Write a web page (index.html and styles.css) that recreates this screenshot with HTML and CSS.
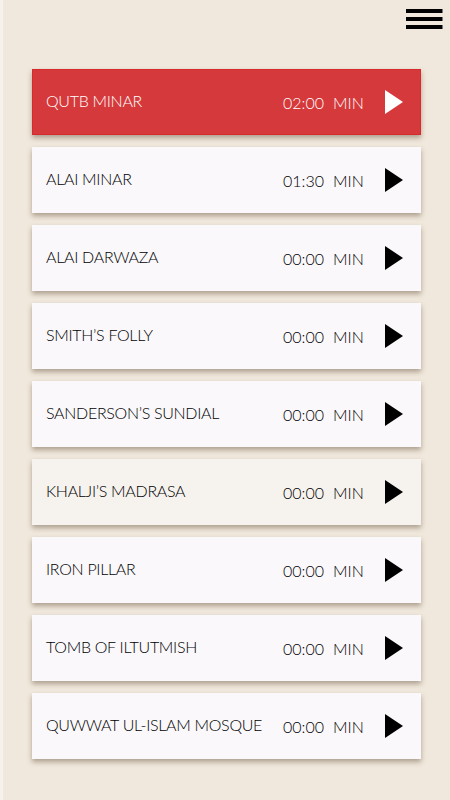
FILE: index.html
```html
<!DOCTYPE html>
<html lang="en">
<head>
    <meta charset="UTF-8">
    <meta name="viewport" content="width=device-width, initial-scale=1.0">
    <title>Qutb Complex Audio Tour</title>
    <link rel="stylesheet" href="styles.css">
</head>
<body>
    <div class="page">
        <div class="topbar">
            <div class="menu">
                <span></span>
                <span></span>
                <span></span>
            </div>
        </div>
        <div class="list">
            <div class="track active">
                <span class="name">QUTB MINAR</span>
                <span class="time">02:00<span class="unit">MIN</span></span>
                <svg class="play" viewBox="0 0 18 24"><polygon points="0,0 18,12 0,24"/></svg>
            </div>
            <div class="track">
                <span class="name">ALAI MINAR</span>
                <span class="time">01:30<span class="unit">MIN</span></span>
                <svg class="play" viewBox="0 0 18 24"><polygon points="0,0 18,12 0,24"/></svg>
            </div>
            <div class="track">
                <span class="name">ALAI DARWAZA</span>
                <span class="time">00:00<span class="unit">MIN</span></span>
                <svg class="play" viewBox="0 0 18 24"><polygon points="0,0 18,12 0,24"/></svg>
            </div>
            <div class="track">
                <span class="name">SMITH’S FOLLY</span>
                <span class="time">00:00<span class="unit">MIN</span></span>
                <svg class="play" viewBox="0 0 18 24"><polygon points="0,0 18,12 0,24"/></svg>
            </div>
            <div class="track">
                <span class="name">SANDERSON’S SUNDIAL</span>
                <span class="time">00:00<span class="unit">MIN</span></span>
                <svg class="play" viewBox="0 0 18 24"><polygon points="0,0 18,12 0,24"/></svg>
            </div>
            <div class="track hover">
                <span class="name">KHALJI’S MADRASA</span>
                <span class="time">00:00<span class="unit">MIN</span></span>
                <svg class="play" viewBox="0 0 18 24"><polygon points="0,0 18,12 0,24"/></svg>
            </div>
            <div class="track">
                <span class="name">IRON PILLAR</span>
                <span class="time">00:00<span class="unit">MIN</span></span>
                <svg class="play" viewBox="0 0 18 24"><polygon points="0,0 18,12 0,24"/></svg>
            </div>
            <div class="track">
                <span class="name">TOMB OF ILTUTMISH</span>
                <span class="time">00:00<span class="unit">MIN</span></span>
                <svg class="play" viewBox="0 0 18 24"><polygon points="0,0 18,12 0,24"/></svg>
            </div>
            <div class="track">
                <span class="name">QUWWAT UL-ISLAM MOSQUE</span>
                <span class="time">00:00<span class="unit">MIN</span></span>
                <svg class="play" viewBox="0 0 18 24"><polygon points="0,0 18,12 0,24"/></svg>
            </div>
        </div>
    </div>
</body>
</html>
```

FILE: styles.css
```css
body {
    margin: 0;
    font-family: "Lato", "Open Sans", sans-serif;
    background-color: #f0e8dc;
}

.page {
    min-height: 800px;
    border-left: 3px solid #f6f1ea;
    box-sizing: border-box;
}

.topbar {
    height: 69px;
    display: flex;
    justify-content: flex-end;
    align-items: flex-start;
    padding-right: 8px;
    box-sizing: border-box;
}

.menu {
    display: flex;
    flex-direction: column;
    gap: 4px;
    margin-top: 9px;
}

.menu span {
    display: block;
    width: 36px;
    height: 4px;
    background-color: #000;
    box-shadow: 1px 0 0 #777;
}

.list {
    display: flex;
    flex-direction: column;
    gap: 12px;
    padding: 0 29px 0 29px;
}

.track {
    height: 66px;
    display: flex;
    align-items: center;
    padding: 0 18px 0 14px;
    background-color: #faf8fb;
    color: #000;
    box-shadow: 0 3px 5px rgba(90, 70, 50, 0.45);
    box-sizing: border-box;
}

.track.active {
    background-color: #d6393b;
    border: 1px solid #d82a2c;
    padding: 0 17px 0 13px;
    color: #fff;
}

.track.hover {
    background-color: #f6f2ee;
}

.name {
    flex: 1;
    font-size: 16px;
    font-weight: 300;
    letter-spacing: -0.3px;
    margin-top: -3px;
    white-space: nowrap;
}

.time {
    width: 102px;
    font-size: 16px;
    font-weight: 300;
    margin-top: 1px;
}

.unit {
    margin-left: 9px;
}

.play {
    width: 18px;
    height: 24px;
    fill: #000;
}

.active .play {
    fill: #fff;
}
```
